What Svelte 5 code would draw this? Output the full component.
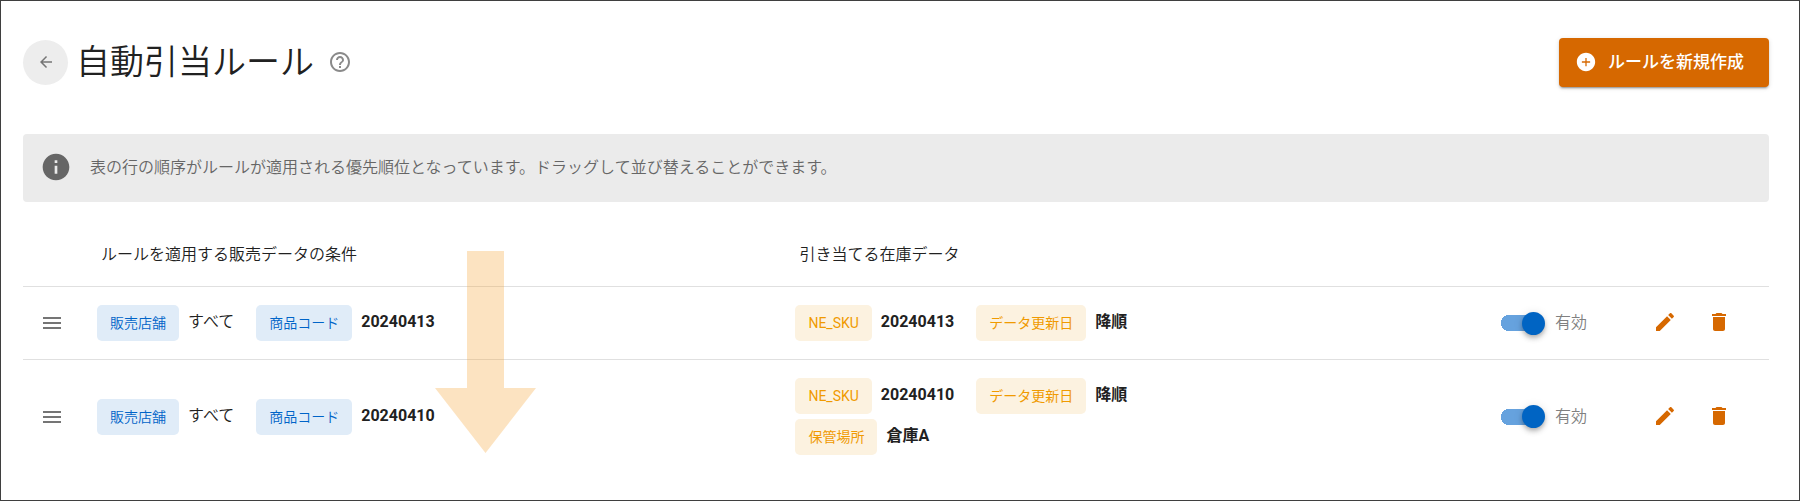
<script>
    let rules = $state([
        {
            id: 1,
            enabled: true,
            conditions: [
                { label: '販売店舗', value: 'すべて', plain: true },
                { label: '商品コード', value: '20240413' },
            ],
            stock: [
                { label: 'NE_SKU', value: '20240413' },
                { label: 'データ更新日', value: '降順' },
            ],
        },
        {
            id: 2,
            enabled: true,
            conditions: [
                { label: '販売店舗', value: 'すべて', plain: true },
                { label: '商品コード', value: '20240410' },
            ],
            stock: [
                { label: 'NE_SKU', value: '20240410' },
                { label: 'データ更新日', value: '降順' },
                { label: '保管場所', value: '倉庫A' },
            ],
        },
    ]);

    const ICONS = {
        back: 'M20 11H7.83l5.59-5.59L12 4l-8 8 8 8 1.41-1.41L7.83 13H20v-2z',
        help: 'M11 18h2v-2h-2v2zm1-16C6.48 2 2 6.48 2 12s4.48 10 10 10 10-4.48 10-10S17.52 2 12 2zm0 18c-4.41 0-8-3.59-8-8s3.59-8 8-8 8 3.59 8 8-3.59 8-8 8zm0-14c-2.21 0-4 1.79-4 4h2c0-1.1.9-2 2-2s2 .9 2 2c0 2-3 1.75-3 5h2c0-2.25 3-2.5 3-5 0-2.21-1.79-4-4-4z',
        add: 'M12 2C6.48 2 2 6.48 2 12s4.48 10 10 10 10-4.48 10-10S17.52 2 12 2zm4.5 10.7h-3.8v3.8h-1.4v-3.8H7.5v-1.4h3.8V7.5h1.4v3.8h3.8v1.4z',
        info: 'M12 2C6.48 2 2 6.48 2 12s4.48 10 10 10 10-4.48 10-10S17.52 2 12 2zm1 15h-2v-6h2v6zm0-8h-2V7h2v2z',
        handle: 'M3 18h18v-2H3v2zm0-5h18v-2H3v2zm0-7v2h18V6H3z',
        edit: 'M3 17.25V21h3.75L17.81 9.94l-3.75-3.75L3 17.25zM20.71 7.04c.39-.39.39-1.02 0-1.41l-2.34-2.34c-.39-.39-1.02-.39-1.41 0l-1.83 1.83 3.75 3.75 1.83-1.83z',
        trash: 'M6 19c0 1.1.9 2 2 2h8c1.1 0 2-.9 2-2V7H6v12zM19 4h-3.5l-1-1h-5l-1 1H5v2h14V4z',
    };
</script>

{#snippet icon(name, size)}
    <svg width={size} height={size} viewBox="0 0 24 24" fill="currentColor" aria-hidden="true">
        <path d={ICONS[name]} />
    </svg>
{/snippet}

{#snippet tags(items, color)}
    <div class="tags">
        {#each items as item}
            <span class="pair">
                <span class="tag {color}">{item.label}</span>
                <span class="value" class:plain={item.plain}>{item.value}</span>
            </span>
        {/each}
    </div>
{/snippet}

<main>
    <header>
        <button class="back" aria-label="戻る">{@render icon('back', 18)}</button>
        <h1>自動引当ルール</h1>
        <button class="help" aria-label="ヘルプ">{@render icon('help', 24)}</button>
        <button class="create">
            {@render icon('add', 22)}
            <span>ルールを新規作成</span>
        </button>
    </header>

    <div class="notice">
        {@render icon('info', 32)}
        <p>表の行の順序がルールが適用される優先順位となっています。ドラッグして並び替えることができます。</p>
    </div>

    <div class="rules">
        <table>
            <colgroup>
                <col class="col-handle" />
                <col class="col-conditions" />
                <col />
                <col class="col-status" />
                <col class="col-actions" />
            </colgroup>
            <thead>
                <tr>
                    <th></th>
                    <th>ルールを適用する販売データの条件</th>
                    <th>引き当てる在庫データ</th>
                    <th></th>
                    <th></th>
                </tr>
            </thead>
            <tbody>
                {#each rules as rule (rule.id)}
                    <tr>
                        <td class="handle">{@render icon('handle', 24)}</td>
                        <td>{@render tags(rule.conditions, 'blue')}</td>
                        <td>{@render tags(rule.stock, 'amber')}</td>
                        <td>
                            <label class="status">
                                <input type="checkbox" role="switch" bind:checked={rule.enabled} />
                                <span>{rule.enabled ? '有効' : '無効'}</span>
                            </label>
                        </td>
                        <td>
                            <div class="actions">
                                <button aria-label="編集">{@render icon('edit', 24)}</button>
                                <button aria-label="削除">{@render icon('trash', 24)}</button>
                            </div>
                        </td>
                    </tr>
                {/each}
            </tbody>
        </table>

        <svg class="arrow" width="102" height="202" viewBox="0 0 102 202" aria-hidden="true">
            <path d="M32 0h37v137h32L50.5 202 0 137h32z" />
        </svg>
    </div>
</main>

<style>
    :global(body) {
        margin: 0;
        background: #fff;
    }

    main {
        box-sizing: border-box;
        min-height: 100vh;
        padding: 37px 30px 24px 22px;
        border: 1px solid #3f3f3f;
        color: #212121;
        font: 350 16px/24px Roboto, 'Noto Sans CJK JP', sans-serif;
    }

    button {
        display: flex;
        align-items: center;
        justify-content: center;
        padding: 0;
        border: 0;
        background: none;
        color: inherit;
        font: inherit;
        cursor: pointer;
    }

    svg {
        display: block;
        flex: none;
    }

    header {
        display: flex;
        align-items: center;
        height: 49px;
    }

    .back {
        box-sizing: border-box;
        width: 45px;
        height: 45px;
        padding-bottom: 2px;
        border-radius: 50%;
        background: #ededed;
        color: #757575;
    }

    h1 {
        margin: 0 0 0 8px;
        padding-bottom: 2px;
        font-size: 34px;
        font-weight: inherit;
        line-height: 46px;
    }

    .help {
        margin-left: 14px;
        padding-bottom: 2px;
        color: #8a8a8a;
    }

    .create {
        box-sizing: border-box;
        gap: 11px;
        height: 49px;
        margin-left: auto;
        padding: 0 25px 2px 16px;
        border-radius: 4px;
        background: #d66800;
        box-shadow:
            0 3px 1px -2px rgba(0, 0, 0, 0.2),
            0 2px 2px rgba(0, 0, 0, 0.14),
            0 1px 5px rgba(0, 0, 0, 0.12);
        color: #fff;
        font-size: 17px;
        font-weight: 500;
    }

    .notice {
        box-sizing: border-box;
        display: flex;
        align-items: center;
        gap: 18px;
        min-height: 68px;
        margin: 47px 0 20px;
        padding: 0 0 2px 17px;
        border-radius: 4px;
        background: #ebebeb;
        color: #666;
    }

    .notice p {
        margin: 0;
        padding-top: 2px;
    }

    .rules {
        position: relative;
    }

    table {
        width: 100%;
        border-spacing: 0;
        table-layout: fixed;
    }

    .col-handle {
        width: 74px;
    }

    .col-conditions {
        width: 40%;
    }

    .col-status {
        width: 146px;
    }

    .col-actions {
        width: 122px;
    }

    th {
        height: 62px;
        padding: 2px 4px 0;
        border-bottom: 1px solid #e0e0e0;
        font-weight: inherit;
        text-align: left;
    }

    td {
        padding: 18px 0;
        vertical-align: middle;
    }

    tbody tr:not(:last-child) td {
        border-bottom: 1px solid #e0e0e0;
    }

    .handle {
        padding-left: 17px;
        color: #757575;
        cursor: grab;
    }

    .tags {
        display: flex;
        flex-wrap: wrap;
        gap: 5px 22px;
        max-width: 480px;
    }

    .pair {
        display: flex;
        gap: 9px;
    }

    .tag {
        padding: 0 13px;
        border-radius: 5px;
        font-size: 14px;
        line-height: 36px;
    }

    .blue {
        background: #e0ecf8;
        color: #0064c8;
    }

    .amber {
        background: #fcf2e0;
        color: #f09a00;
        font-weight: 400;
    }

    .value {
        font-weight: 700;
        line-height: 34px;
    }

    .value.plain {
        font-weight: inherit;
    }

    .status {
        display: flex;
        align-items: center;
        gap: 10px;
        color: #808080;
        cursor: pointer;
    }

    .status input {
        display: flex;
        align-items: center;
        width: 44px;
        height: 24px;
        margin: 0;
        appearance: none;
        background: linear-gradient(#9e9e9e, #9e9e9e) no-repeat 0 center / 40px 16px;
        border-radius: 8px;
        cursor: pointer;
    }

    .status input::before {
        content: '';
        width: 23px;
        height: 23px;
        border-radius: 50%;
        background: #fafafa;
        box-shadow:
            0 2px 4px -1px rgba(0, 0, 0, 0.2),
            0 4px 5px rgba(0, 0, 0, 0.14),
            0 1px 10px rgba(0, 0, 0, 0.12);
    }

    .status input:checked {
        background:
            radial-gradient(circle at 8px 12px, #66a2de 8px, transparent 8px) no-repeat 0 0 / 8px 24px,
            linear-gradient(#66a2de, #66a2de) no-repeat 8px center / 24px 16px;
    }

    .status input:checked::before {
        margin-left: auto;
        background: #0064c3;
    }

    .actions {
        display: flex;
        gap: 18px;
        padding-bottom: 2px;
        color: #d66800;
    }

    .actions button {
        width: 36px;
        height: 34px;
    }

    .arrow {
        position: absolute;
        top: 29px;
        left: 412px;
        fill: rgba(246, 161, 51, 0.3);
        pointer-events: none;
    }
</style>
